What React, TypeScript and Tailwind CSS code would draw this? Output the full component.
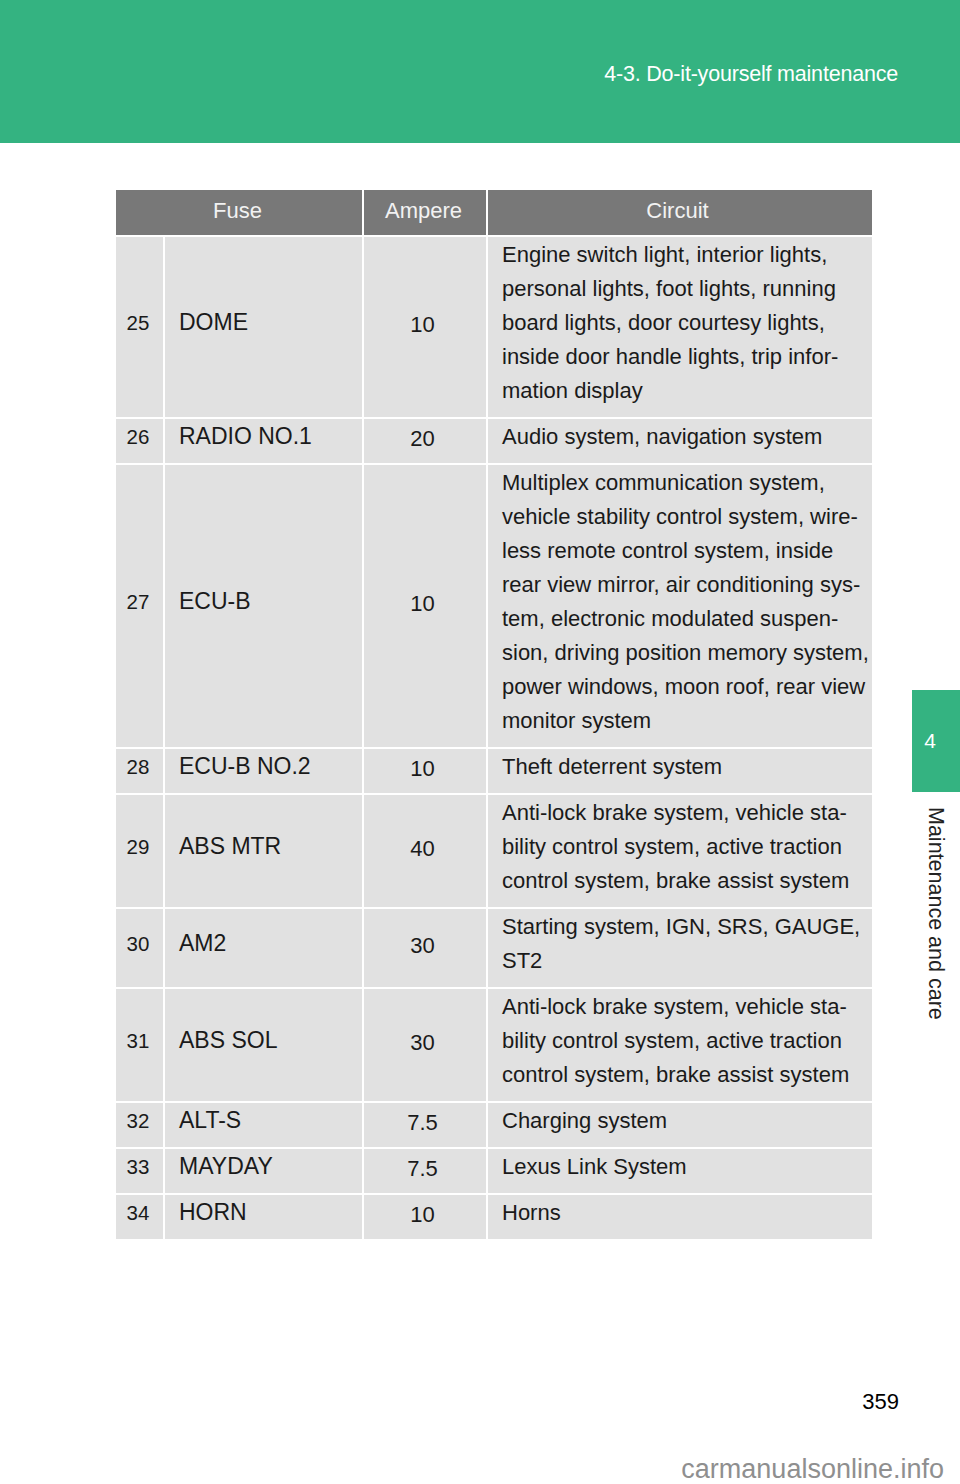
const rows: { no: string; fuse: string; amp: string; circuit: string[] }[] = [
  {
    no: '25',
    fuse: 'DOME',
    amp: '10',
    circuit: [
      'Engine switch light, interior lights,',
      'personal lights, foot lights, running',
      'board lights, door courtesy lights,',
      'inside door handle lights, trip infor-',
      'mation display',
    ],
  },
  { no: '26', fuse: 'RADIO NO.1', amp: '20', circuit: ['Audio system, navigation system'] },
  {
    no: '27',
    fuse: 'ECU-B',
    amp: '10',
    circuit: [
      'Multiplex communication system,',
      'vehicle stability control system, wire-',
      'less remote control system, inside',
      'rear view mirror, air conditioning sys-',
      'tem, electronic modulated suspen-',
      'sion, driving position memory system,',
      'power windows, moon roof, rear view',
      'monitor system',
    ],
  },
  { no: '28', fuse: 'ECU-B NO.2', amp: '10', circuit: ['Theft deterrent system'] },
  {
    no: '29',
    fuse: 'ABS MTR',
    amp: '40',
    circuit: [
      'Anti-lock brake system, vehicle sta-',
      'bility control system, active traction',
      'control system, brake assist system',
    ],
  },
  { no: '30', fuse: 'AM2', amp: '30', circuit: ['Starting system, IGN, SRS, GAUGE,', 'ST2'] },
  {
    no: '31',
    fuse: 'ABS SOL',
    amp: '30',
    circuit: [
      'Anti-lock brake system, vehicle sta-',
      'bility control system, active traction',
      'control system, brake assist system',
    ],
  },
  { no: '32', fuse: 'ALT-S', amp: '7.5', circuit: ['Charging system'] },
  { no: '33', fuse: 'MAYDAY', amp: '7.5', circuit: ['Lexus Link System'] },
  { no: '34', fuse: 'HORN', amp: '10', circuit: ['Horns'] },
];

export default function App() {
  return (
    <div className="w-[960px] h-[1484px] bg-white font-['Liberation_Sans',Arial,sans-serif] text-[#1a1a1a] overflow-hidden">
      {/* Section header */}
      <div className="h-[143px] bg-[#34b381] flex justify-end pr-[62px] pt-[60px]">
        <span className="text-white text-[21.5px] leading-[28px] tracking-[-0.2px]">
          4-3. Do-it-yourself maintenance
        </span>
      </div>

      <div className="flex">
        {/* Fuse table */}
        <div className="flex-1 pl-[116px] pt-[47px]">
          <div className="w-[756px] grid grid-cols-[47px_197px_122px_384px] gap-[2px] bg-white">
            <div className="col-span-2 bg-[#787878] h-[45px] flex items-center justify-center pb-[5px] pr-[3px] text-[#f2f2f2] text-[22px]">
              Fuse
            </div>
            <div className="bg-[#787878] h-[45px] flex items-center justify-center pb-[5px] pr-[3px] text-[#f2f2f2] text-[22px]">
              Ampere
            </div>
            <div className="bg-[#787878] h-[45px] flex items-center justify-center pb-[5px] pr-[5px] text-[#f2f2f2] text-[22px]">
              Circuit
            </div>

            {rows.map((r) => (
              <div key={r.no} className="contents">
                <div className="bg-[#e1e1e1] flex items-center justify-center text-[20.5px] pb-[8px] pr-[3px]">
                  {r.no}
                </div>
                <div className="bg-[#e1e1e1] flex items-center pl-[14px] pb-[9px] text-[23px]">
                  {r.fuse}
                </div>
                <div className="bg-[#e1e1e1] flex items-center justify-center text-[22px] pb-[6px] pr-[5px]">
                  {r.amp}
                </div>
                <div className="bg-[#e1e1e1] pl-[14px] pt-[1px] pb-[9px] text-[22px] leading-[34px]">
                  {r.circuit.map((line) => (
                    <div key={line} className="whitespace-nowrap">
                      {line}
                    </div>
                  ))}
                </div>
              </div>
            ))}
          </div>
        </div>

        {/* Chapter tab */}
        <div className="w-[48px] pt-[547px] flex flex-col items-center">
          <div className="w-[48px] h-[102px] bg-[#34b381] flex items-center justify-center pr-[12px] text-white text-[21px]">
            4
          </div>
          <div className="mt-[15px] [writing-mode:vertical-rl] text-[21.5px] leading-[24px] text-[#222]">
            Maintenance and care
          </div>
        </div>
      </div>

      {/* Footer */}
      <div className="mt-[148px] pr-[61px] flex justify-end text-[22px] leading-[30px] text-black">
        359
      </div>
      <div className="mt-[36px] pr-[16px] flex justify-end text-[27px] leading-[32px] text-[#8f8f8f]">
        carmanualsonline.info
      </div>
    </div>
  );
}
